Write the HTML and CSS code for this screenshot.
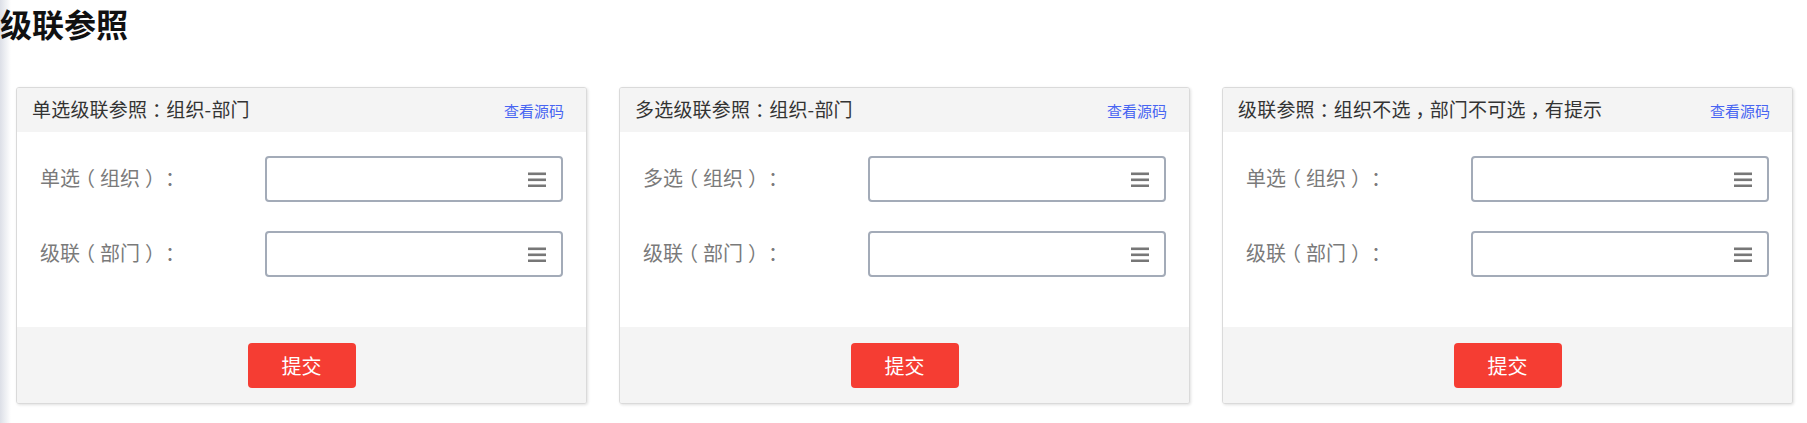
FILE: index.html
```html
<!DOCTYPE html>
<html lang="zh-CN">
<head>
<meta charset="utf-8">
<title>级联参照</title>
<link rel="stylesheet" href="styles.css">
</head>
<body>
<h1 class="page-title">级联参照</h1>
<div class="row">
  <div class="col">
    <div class="card">
      <div class="card-head"><span class="card-title">单选级联参照<span class="fw">：</span>组织-部门</span><a class="src-link" href="#">查看源码</a></div>
      <div class="card-body">
        <div class="form-row"><label class="form-label">单选<span class="fw">（</span>组织<span class="fw">）</span><span class="fw">：</span></label><div class="ref-input"><svg class="ref-icon" viewBox="0 0 18 15" width="18" height="15"><rect x="0" y="0.5" width="18" height="2.6"/><rect x="0" y="6.5" width="18" height="2.6"/><rect x="0" y="12.5" width="18" height="2.6"/></svg></div></div>
        <div class="form-row"><label class="form-label">级联<span class="fw">（</span>部门<span class="fw">）</span><span class="fw">：</span></label><div class="ref-input"><svg class="ref-icon" viewBox="0 0 18 15" width="18" height="15"><rect x="0" y="0.5" width="18" height="2.6"/><rect x="0" y="6.5" width="18" height="2.6"/><rect x="0" y="12.5" width="18" height="2.6"/></svg></div></div>
      </div>
      <div class="card-foot"><button class="btn-submit" type="button">提交</button></div>
    </div>
  </div>
  <div class="col">
    <div class="card">
      <div class="card-head"><span class="card-title">多选级联参照<span class="fw">：</span>组织-部门</span><a class="src-link" href="#">查看源码</a></div>
      <div class="card-body">
        <div class="form-row"><label class="form-label">多选<span class="fw">（</span>组织<span class="fw">）</span><span class="fw">：</span></label><div class="ref-input"><svg class="ref-icon" viewBox="0 0 18 15" width="18" height="15"><rect x="0" y="0.5" width="18" height="2.6"/><rect x="0" y="6.5" width="18" height="2.6"/><rect x="0" y="12.5" width="18" height="2.6"/></svg></div></div>
        <div class="form-row"><label class="form-label">级联<span class="fw">（</span>部门<span class="fw">）</span><span class="fw">：</span></label><div class="ref-input"><svg class="ref-icon" viewBox="0 0 18 15" width="18" height="15"><rect x="0" y="0.5" width="18" height="2.6"/><rect x="0" y="6.5" width="18" height="2.6"/><rect x="0" y="12.5" width="18" height="2.6"/></svg></div></div>
      </div>
      <div class="card-foot"><button class="btn-submit" type="button">提交</button></div>
    </div>
  </div>
  <div class="col">
    <div class="card">
      <div class="card-head"><span class="card-title">级联参照<span class="fw">：</span>组织不选<span class="fw">，</span>部门不可选<span class="fw">，</span>有提示</span><a class="src-link" href="#">查看源码</a></div>
      <div class="card-body">
        <div class="form-row"><label class="form-label">单选<span class="fw">（</span>组织<span class="fw">）</span><span class="fw">：</span></label><div class="ref-input"><svg class="ref-icon" viewBox="0 0 18 15" width="18" height="15"><rect x="0" y="0.5" width="18" height="2.6"/><rect x="0" y="6.5" width="18" height="2.6"/><rect x="0" y="12.5" width="18" height="2.6"/></svg></div></div>
        <div class="form-row"><label class="form-label">级联<span class="fw">（</span>部门<span class="fw">）</span><span class="fw">：</span></label><div class="ref-input"><svg class="ref-icon" viewBox="0 0 18 15" width="18" height="15"><rect x="0" y="0.5" width="18" height="2.6"/><rect x="0" y="6.5" width="18" height="2.6"/><rect x="0" y="12.5" width="18" height="2.6"/></svg></div></div>
      </div>
      <div class="card-foot"><button class="btn-submit" type="button">提交</button></div>
    </div>
  </div>
</div>
</body>
</html>
```
FILE: styles.css
```css
* { box-sizing: border-box; }
html, body { margin: 0; padding: 0; }
body {
  font-family: "Noto Sans CJK SC", "Noto Sans", sans-serif;
  background: linear-gradient(to right, #dcdfe7 0, #eceef2 5px, #ffffff 11px);
  color: #333;
  min-height: 423px;
}
.page-title {
  margin: 0;
  font-size: 32px;
  line-height: 46px;
  font-weight: 700;
  color: #111;
}
.row {
  display: flex;
  padding-top: 41px;
  width: 1809px;
}
.col {
  flex: 1 1 0;
  padding: 0 16px;
}
.card {
  border: 1px solid #dadada;
  border-radius: 3px;
  box-shadow: 1px 1px 3px rgba(0,0,0,0.12);
  overflow: hidden;
  background: #fff;
}
.card-head {
  height: 44px;
  background: #f4f4f4;
  display: flex;
  align-items: center;
  justify-content: space-between;
  padding: 0 22px 0 15px;
}
.card-title {
  font-size: 19px;
  letter-spacing: 0.2px;
  color: #333;
  margin-bottom: 3px;
}
.fw {
  font-feature-settings: "halt" 1;
  margin: 0 0.25em;
  letter-spacing: 0;
}
.src-link {
  font-size: 15px;
  color: #4865f2;
  text-decoration: none;
}
.card-body {
  padding: 24px 23px 50px 23px;
  display: flex;
  flex-direction: column;
  gap: 29px;
}
.form-row {
  display: grid;
  grid-template-columns: 225px 1fr;
  align-items: center;
}
.form-label {
  font-size: 20px;
  color: #7a7a7a;
  margin-bottom: 4px;
}
.ref-input {
  height: 46px;
  border: 2px solid #a3abb8;
  border-radius: 4px;
  display: flex;
  align-items: center;
  justify-content: flex-end;
  padding-right: 15px;
  background: #fff;
}
.ref-icon {
  fill: #777;
  display: block;
}
.card-foot {
  height: 76px;
  background: #f4f4f4;
  display: flex;
  justify-content: center;
  padding-top: 16px;
}
.btn-submit {
  width: 108px;
  height: 45px;
  border: none;
  border-radius: 4px;
  background: #f53d33;
  color: #fff;
  font-family: "Noto Sans CJK SC", "Noto Sans", sans-serif;
  font-size: 20px;
  padding: 0;
}
```
